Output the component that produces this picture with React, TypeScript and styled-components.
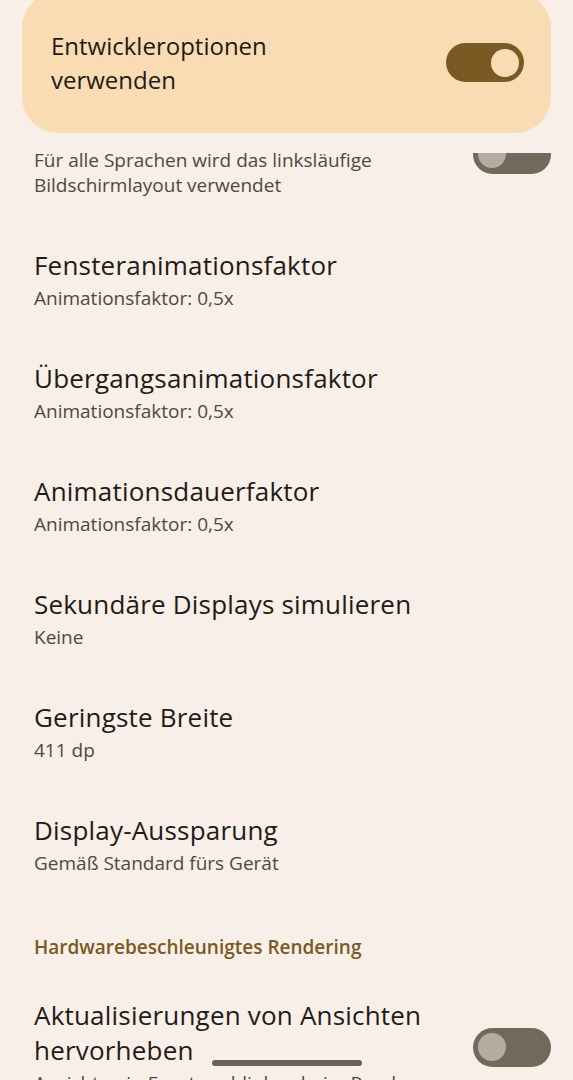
import React from 'react';
import styled, { createGlobalStyle } from 'styled-components';

const GlobalStyle = createGlobalStyle`
    html, body {
        margin: 0;
        padding: 0;
        background: #f8efe8;
    }
    body {
        font-family: 'Open Sans', 'Noto Sans', sans-serif;
        -webkit-font-smoothing: antialiased;
    }
`;

const Screen = styled.div`
    position: relative;
    width: 573px;
    height: 1080px;
    overflow: hidden;
    background: #f8efe8;
    display: flex;
    flex-direction: column;
`;

const Header = styled.div`
    flex: none;
    height: 153px;
    padding: 0 22px;
    box-sizing: border-box;
`;

const MainCard = styled.div`
    margin-top: -8px;
    height: 141px;
    box-sizing: border-box;
    border-radius: 36px;
    background: #f9dcb3;
    display: flex;
    align-items: center;
    justify-content: space-between;
    padding: 0 27px 0 29px;
`;

const MainLabel = styled.div`
    max-width: 260px;
    font-size: 24px;
    line-height: 34px;
    color: #1f1b16;
`;

const ScrollArea = styled.div`
    flex: 1;
    overflow: hidden;
`;

const ScrollContent = styled.div`
    margin-top: -68px;
`;

const Row = styled.div`
    display: flex;
    align-items: center;
    gap: 24px;
    padding: 25px 22px 25px 34px;
`;

const RowText = styled.div`
    flex: 1;
    min-width: 0;
`;

const Title = styled.div`
    font-size: 26px;
    line-height: 35px;
    letter-spacing: 0.2px;
    color: #1f1b16;
`;

const Summary = styled.div`
    margin-top: 3px;
    font-size: 19px;
    line-height: 25px;
    color: #51483d;
`;

const Category = styled.div`
    padding: 34px 34px 14px;
    font-size: 19px;
    line-height: 24px;
    font-weight: 600;
    color: #7a5a23;
`;

const Track = styled.div<{ $on: boolean }>`
    flex: none;
    width: 78px;
    height: 39px;
    border-radius: 20px;
    box-sizing: border-box;
    padding: 0 5px;
    display: flex;
    align-items: center;
    justify-content: ${p => (p.$on ? 'flex-end' : 'flex-start')};
    background: ${p => (p.$on ? '#7a5a23' : '#716a5c')};
`;

const Thumb = styled.div<{ $on: boolean }>`
    width: 28px;
    height: 28px;
    border-radius: 50%;
    background: ${p => (p.$on ? '#f9dcb3' : '#b6ab9f')};
`;

const GestureBar = styled.div`
    position: absolute;
    left: 212px;
    bottom: 14px;
    width: 150px;
    height: 6px;
    border-radius: 3px;
    background: #67615b;
`;

type SwitchProps = { on: boolean };

const Switch: React.FC<SwitchProps> = ({ on }: SwitchProps) => (
    <Track $on={on}>
        <Thumb $on={on} />
    </Track>
);

type SettingProps = {
    title: string,
    summary?: string,
    toggle?: boolean,
}

const Setting: React.FC<SettingProps> = ({ title, summary, toggle }: SettingProps) => (
    <Row>
        <RowText>
            <Title>{title}</Title>
            {summary && <Summary>{summary}</Summary>}
        </RowText>
        {toggle !== undefined && <Switch on={toggle} />}
    </Row>
);

const items: SettingProps[] = [
    { title: 'Fensteranimationsfaktor', summary: 'Animationsfaktor: 0,5x' },
    { title: 'Übergangsanimationsfaktor', summary: 'Animationsfaktor: 0,5x' },
    { title: 'Animationsdauerfaktor', summary: 'Animationsfaktor: 0,5x' },
    { title: 'Sekundäre Displays simulieren', summary: 'Keine' },
    { title: 'Geringste Breite', summary: '411 dp' },
    { title: 'Display-Aussparung', summary: 'Gemäß Standard fürs Gerät' },
];

const App: React.FC = () => {
    return (
        <Screen>
            <GlobalStyle />
            <Header>
                <MainCard>
                    <MainLabel>Entwickleroptionen verwenden</MainLabel>
                    <Switch on={true} />
                </MainCard>
            </Header>
            <ScrollArea>
                <ScrollContent>
                    <Setting
                        title="Linksläufiges Layout erzwingen"
                        summary="Für alle Sprachen wird das linksläufige Bildschirmlayout verwendet"
                        toggle={false}
                    />
                    {items.map(item => (
                        <Setting key={item.title} {...item} />
                    ))}
                    <Category>Hardwarebeschleunigtes Rendering</Category>
                    <Setting
                        title="Aktualisierungen von Ansichten hervorheben"
                        summary="Ansichten in Fenstern blinken beim Rendern"
                        toggle={false}
                    />
                </ScrollContent>
            </ScrollArea>
            <GestureBar />
        </Screen>
    );
}

export default App;
